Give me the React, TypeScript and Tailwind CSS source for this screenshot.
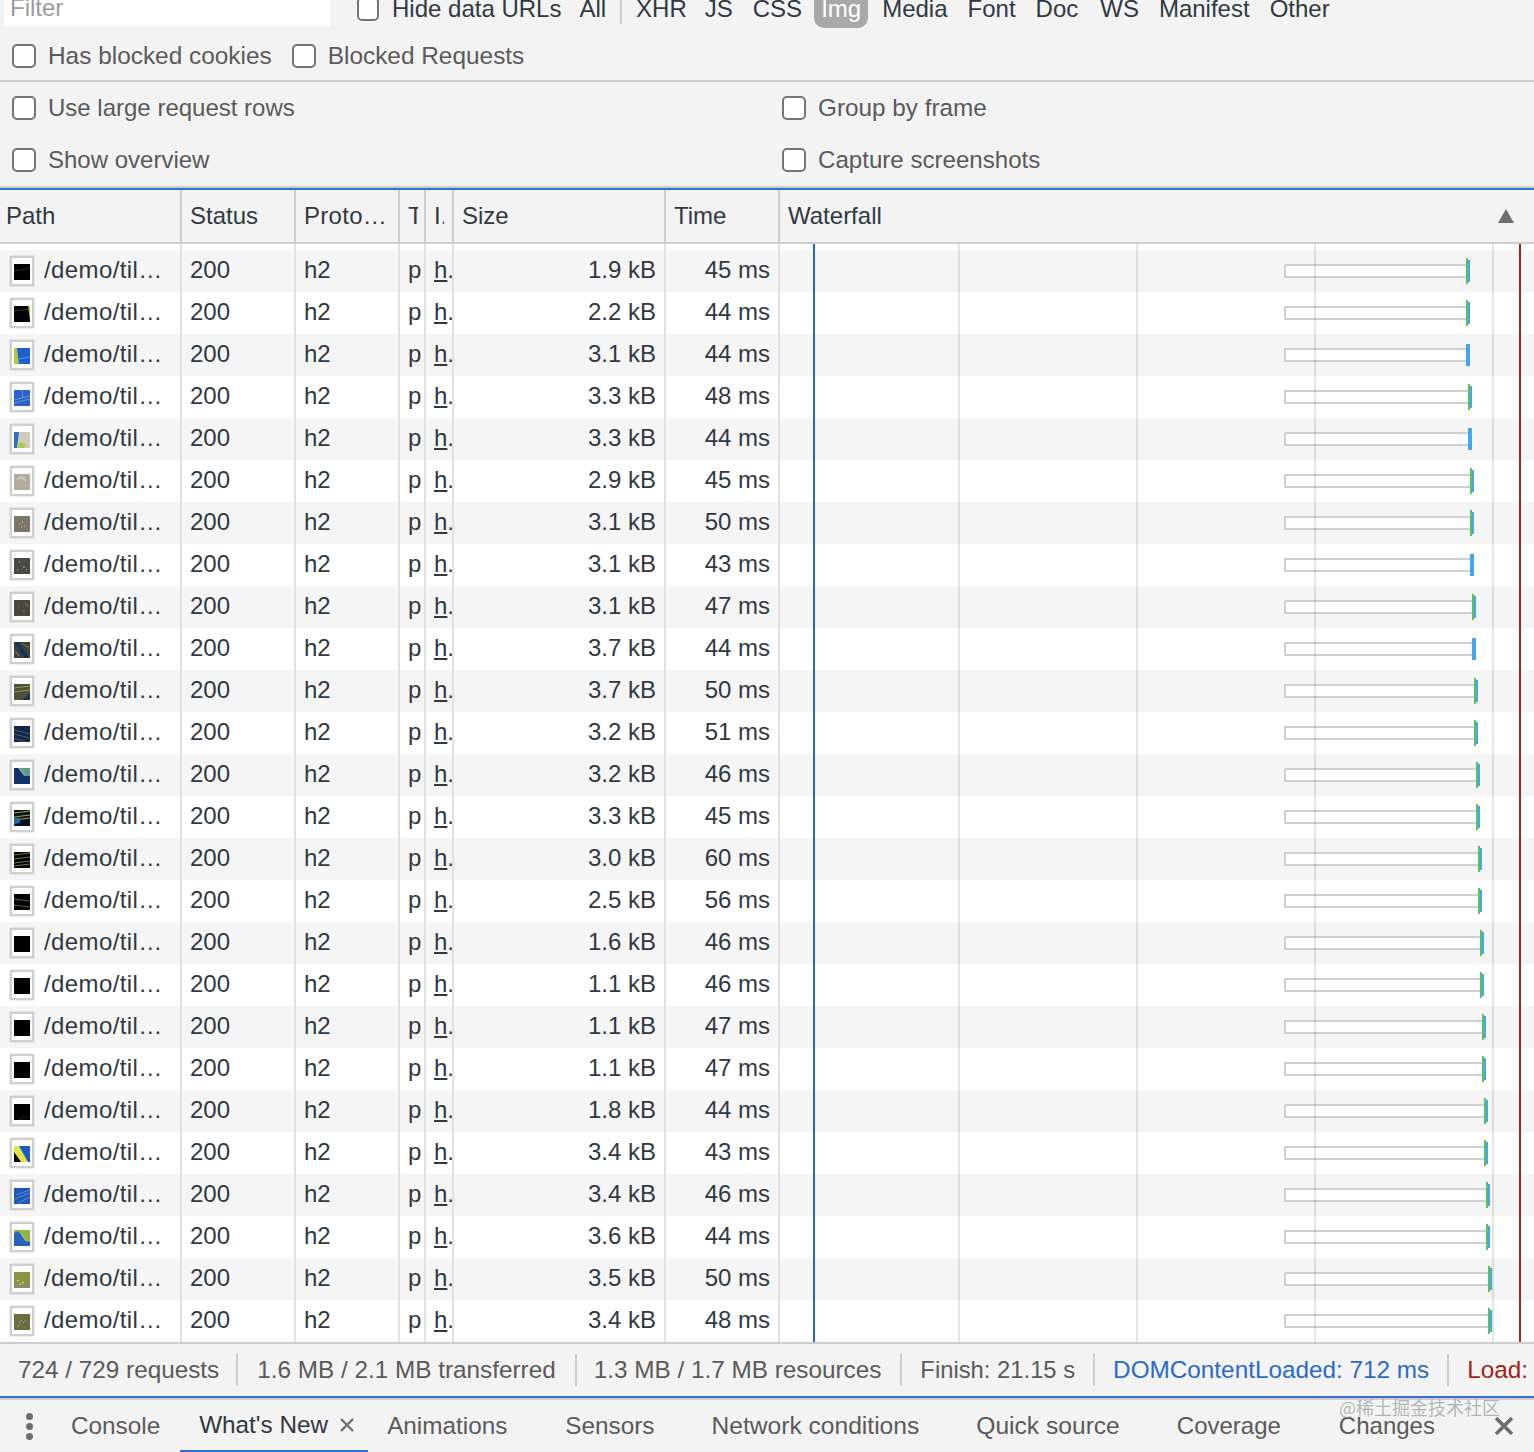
import React from "react";

type Req = { size: string; time: string; end: number; blueOnly?: boolean; thumb: number };

const requests: Req[] = [
  { size: "1.9 kB", time: "45 ms", end: 1466, thumb: 0 },
  { size: "2.2 kB", time: "44 ms", end: 1466, thumb: 1 },
  { size: "3.1 kB", time: "44 ms", end: 1466, blueOnly: true, thumb: 2 },
  { size: "3.3 kB", time: "48 ms", end: 1468, thumb: 3 },
  { size: "3.3 kB", time: "44 ms", end: 1468, blueOnly: true, thumb: 4 },
  { size: "2.9 kB", time: "45 ms", end: 1470, thumb: 5 },
  { size: "3.1 kB", time: "50 ms", end: 1470, thumb: 6 },
  { size: "3.1 kB", time: "43 ms", end: 1470, blueOnly: true, thumb: 7 },
  { size: "3.1 kB", time: "47 ms", end: 1472, thumb: 8 },
  { size: "3.7 kB", time: "44 ms", end: 1472, blueOnly: true, thumb: 9 },
  { size: "3.7 kB", time: "50 ms", end: 1474, thumb: 10 },
  { size: "3.2 kB", time: "51 ms", end: 1474, thumb: 11 },
  { size: "3.2 kB", time: "46 ms", end: 1476, thumb: 12 },
  { size: "3.3 kB", time: "45 ms", end: 1476, thumb: 13 },
  { size: "3.0 kB", time: "60 ms", end: 1478, thumb: 14 },
  { size: "2.5 kB", time: "56 ms", end: 1478, thumb: 15 },
  { size: "1.6 kB", time: "46 ms", end: 1480, thumb: 16 },
  { size: "1.1 kB", time: "46 ms", end: 1480, thumb: 16 },
  { size: "1.1 kB", time: "47 ms", end: 1482, thumb: 16 },
  { size: "1.1 kB", time: "47 ms", end: 1482, thumb: 16 },
  { size: "1.8 kB", time: "44 ms", end: 1484, thumb: 17 },
  { size: "3.4 kB", time: "43 ms", end: 1484, thumb: 18 },
  { size: "3.4 kB", time: "46 ms", end: 1486, thumb: 19 },
  { size: "3.6 kB", time: "44 ms", end: 1486, thumb: 20 },
  { size: "3.5 kB", time: "50 ms", end: 1488, thumb: 21 },
  { size: "3.4 kB", time: "48 ms", end: 1488, thumb: 22 },
];

// tiny previews of the map tiles, 16x16 viewBox
const thumbs: React.ReactNode[] = [
  <><rect width="16" height="16" fill="#000" /><path d="M0 7L16 4" stroke="#2f5a1e" strokeWidth="0.6" /></>,
  <><rect width="16" height="16" fill="#000" /><path d="M0 5L14 3" stroke="#1d6a5a" strokeWidth="0.6" /><path d="M14 0H16V14Z" fill="#b5c93a" /></>,
  <><rect width="16" height="16" fill="#1f5fd0" /><path d="M0 0H3L5 16H0Z" fill="#a8cf3a" /><path d="M5 11L16 9" stroke="#9fc4f0" strokeWidth="0.5" /></>,
  <><rect width="16" height="16" fill="#2a62c8" /><path d="M0 10L16 6M0 13L16 9M8 0L9 8" stroke="#8fb4ea" strokeWidth="0.6" /></>,
  <><rect width="16" height="16" fill="#cfcabb" /><path d="M0 0H5L3 16H0Z" fill="#2d6fc0" /><path d="M3 16L6 10L12 12L10 16Z" fill="#a9c94e" /></>,
  <><rect width="16" height="16" fill="#b3ab9b" /><path d="M3 5L8 3L12 7" stroke="#cdc6b4" strokeWidth="2" fill="none" /></>,
  <><rect width="16" height="16" fill="#7c766a" /><path d="M5 8H6M8 6H9M10 10H11M7 11H8" stroke="#c9c5b5" strokeWidth="1" /></>,
  <><rect width="16" height="16" fill="#4a4a40" /><path d="M9 9H11M5 4H6M12 12H13M3 12H4" stroke="#b5b5a0" strokeWidth="1" /></>,
  <><rect width="16" height="16" fill="#4d463c" /><path d="M11 3L14 7M9 11H11M4 6H5" stroke="#8a9050" strokeWidth="0.8" /></>,
  <><rect width="16" height="16" fill="#3d4236" /><path d="M2 0L13 16" stroke="#15315e" strokeWidth="4" /><path d="M9 2L15 6M1 9L5 14" stroke="#a8a860" strokeWidth="0.7" /></>,
  <><rect width="16" height="16" fill="#4f4f3a" /><path d="M0 4L16 2M0 8L16 6" stroke="#a9a860" strokeWidth="0.8" /><path d="M8 16L16 9V16Z" fill="#173358" /></>,
  <><rect width="16" height="16" fill="#12274f" /><path d="M0 4L16 8M0 8L16 12M0 12L12 16" stroke="#8a9a50" strokeWidth="0.5" /></>,
  <><rect width="16" height="16" fill="#12306a" /><path d="M4 0H16V8H10Z" fill="#5f9a8f" /><path d="M5 0L11 7" stroke="#c2c98a" strokeWidth="1" /></>,
  <><rect width="16" height="16" fill="#06131c" /><path d="M0 3L16 1M0 7L16 5M0 10L16 8" stroke="#a4b83e" strokeWidth="0.9" /><path d="M0 8H6V13L0 14Z" fill="#2a68a8" /></>,
  <><rect width="16" height="16" fill="#000" /><path d="M0 3L16 1M0 7L16 5M0 11L16 9M0 14L16 12" stroke="#8e9a30" strokeWidth="0.8" /></>,
  <><rect width="16" height="16" fill="#000" /><path d="M0 5L16 7M0 11L16 13" stroke="#7b7f24" strokeWidth="0.8" /></>,
  <rect width="16" height="16" fill="#000" />,
  <><rect width="16" height="16" fill="#000" /><path d="M4 16L14 12" stroke="#1e4a1a" strokeWidth="0.6" /></>,
  <><rect width="16" height="16" fill="#1b5bc4" /><path d="M0 0H5L14 16H5L0 14Z" fill="#e3e34a" /><path d="M0 6L7 16H0Z" fill="#000" /></>,
  <><rect width="16" height="16" fill="#2257bd" /><path d="M2 7L16 2M0 11L16 5M4 15L16 9" stroke="#86aee6" strokeWidth="0.6" /></>,
  <><rect width="16" height="16" fill="#8fb63e" /><path d="M0 3L5 1L12 11L16 12V16H0Z" fill="#2564b8" /><path d="M5 1L12 11" stroke="#c7e0a0" strokeWidth="0.8" /></>,
  <><rect width="16" height="16" fill="#8a9440" /><path d="M3 9L5 8M8 11L10 10M5 13L7 12" stroke="#dfe6b8" strokeWidth="1" /><rect y="13" width="16" height="3" fill="#8c8a6e" /></>,
  <><rect width="16" height="16" fill="#6b6c3c" /><path d="M5 9L8 6M9 9L12 6M3 13L6 11" stroke="#aab08a" strokeWidth="0.8" /></>,
];

function Check({ label, className = "", labelClass = "" }: { label: string; className?: string; labelClass?: string }) {
  return (
    <label className={`flex items-center gap-3 ${className}`}>
      <span className="h-6 w-6 shrink-0 rounded-[5px] border-2 border-[#767676] bg-white" />
      <span className={`text-[#5a5a5a] ${labelClass}`}>{label}</span>
    </label>
  );
}

const gridCols = "grid grid-cols-[182px_114px_104px_26px_28px_212px_114px_1fr]";
const cellLine = "border-r-2 border-[#e1e1e1]";
const headLine = "border-r-2 border-[#cdcdcd]";

function HeadCell({ children, className = "" }: { children?: React.ReactNode; className?: string }) {
  return <div className={`overflow-hidden whitespace-nowrap px-2 leading-[52px] ${headLine} ${className}`}>{children}</div>;
}

function Bar({ end, blueOnly }: { end: number; blueOnly?: boolean }) {
  return (
    <div className="ml-[504px] flex items-center">
      <div className="h-[14px] border-2 border-r-0 border-[#cfcfcf] bg-white" style={{ width: end - 1284 }} />
      {blueOnly ? (
        <div className="h-[22px] w-1 bg-[#45a5ee]" />
      ) : (
        <>
          <div className="h-[26px] w-0.5 bg-[#5cc05c]" />
          <div className="h-[22px] w-0.5 bg-[#45a5ee]" />
        </>
      )}
    </div>
  );
}

function Row({ req, odd }: { req: Req; odd: boolean }) {
  const cell = `overflow-hidden whitespace-nowrap px-2 leading-[40px] ${cellLine}`;
  return (
    <div className={`${gridCols} h-[42px] ${odd ? "bg-[#f5f5f5]" : "bg-white"}`}>
      <div className={`flex items-center pl-[10px] ${cellLine}`}>
        <div className="flex h-[30px] w-6 shrink-0 items-center justify-center border-2 border-[#cfcfcf] bg-white pt-0.5 shadow-[0_0_1px_#999]">
          <svg width="16" height="16" viewBox="0 0 16 16" className="block blur-[0.4px]">
            {thumbs[req.thumb]}
          </svg>
        </div>
        <span className="mb-0.5 ml-[10px] whitespace-nowrap tracking-[0.4px]">/demo/til…</span>
      </div>
      <div className={cell}>200</div>
      <div className={cell}>h2</div>
      <div className={cell}>p</div>
      <div className={cell}>
        <span className="underline">h</span>.
      </div>
      <div className={`${cell} text-right`}>{req.size}</div>
      <div className={`${cell} text-right`}>{req.time}</div>
      <div className="flex items-center">
        <Bar end={req.end} blueOnly={req.blueOnly} />
      </div>
    </div>
  );
}

const filters = [
  { name: "XHR", cls: "-mr-0.5 px-[6px]" },
  { name: "JS", cls: "px-[6px]" },
  { name: "CSS", cls: "px-[6px]" },
  { name: "Img", cls: "-ml-0.5 rounded-b-[10px] bg-[#a8a8a8] px-[7px] text-white" },
  { name: "Media", cls: "px-[6px]" },
  { name: "Font", cls: "px-[6px]" },
  { name: "Doc", cls: "px-[6px]" },
  { name: "WS", cls: "ml-0.5 px-[6px]" },
  { name: "Manifest", cls: "px-[6px]" },
  { name: "Other", cls: "px-[6px]" },
];

export default function App() {
  return (
    <div className="flex h-[1452px] w-[1534px] flex-col overflow-hidden bg-[#f3f3f3] font-['Liberation_Sans',Arial,sans-serif] text-[24px] text-[#303942]">
      {/* filter bar, cut off by the top of the shot */}
      <div className="flex h-[30px] shrink-0 items-end pb-0.5 pl-1">
        <div className="mb-0.5 flex h-[38px] w-[326px] items-center bg-white pl-[6px] pt-0.5 text-[#9b9b9b]">Filter</div>
        <label className="ml-[27px] flex h-[38px] items-center gap-[13px]">
          <span className="h-6 w-[22px] shrink-0 rounded-[5px] border-2 border-[#767676] bg-white" />
          <span className="whitespace-nowrap">Hide data URLs</span>
        </label>
        <div className="ml-3 flex h-[38px] items-center gap-2">
          <span className="px-[6px]">All</span>
          <span className="h-[34px] w-0.5 self-start bg-[#cdcdcd]" />
          {filters.map((f) => (
            <span key={f.name} className={`flex h-[38px] items-center ${f.cls}`}>
              {f.name}
            </span>
          ))}
        </div>
      </div>
      <div className="flex h-[52px] shrink-0 items-center gap-5 border-b-2 border-[#cdcdcd] pl-3 pt-[2px]">
        <Check label="Has blocked cookies" labelClass="text-[24.4px]" />
        <Check label="Blocked Requests" labelClass="text-[24.4px]" />
      </div>
      {/* settings */}
      <div className="grid h-[106px] shrink-0 grid-cols-[782px_1fr] grid-rows-2 border-b-2 border-[#cdcdcd]">
        <Check label="Use large request rows" className="pl-3" />
        <Check label="Group by frame" labelClass="text-[24.3px]" />
        <Check label="Show overview" className="pl-3" />
        <Check label="Capture screenshots" labelClass="text-[24.1px]" />
      </div>
      {/* table */}
      <div className="relative flex-1 border-t-2 border-[#2f6fd6]">
        <div className={`${gridCols} h-[54px] border-b-2 border-[#cdcdcd]`}>
          <HeadCell className="pl-[6px]">Path</HeadCell>
          <HeadCell>Status</HeadCell>
          <HeadCell className="tracking-[0.3px]">Proto…</HeadCell>
          <HeadCell>
            <span className="block w-[10px] overflow-hidden">T</span>
          </HeadCell>
          <HeadCell>
            <span className="block w-[10px] overflow-hidden">I.</span>
          </HeadCell>
          <HeadCell>Size</HeadCell>
          <HeadCell>Time</HeadCell>
          <div className="flex items-center justify-between pl-2 pr-5">
            <span>Waterfall</span>
            <svg width="16" height="14" viewBox="0 0 16 14" className="block">
              <path d="M8 0L16 14H0Z" fill="#6e6e6e" />
            </svg>
          </div>
        </div>
        <div className={`${gridCols} h-[6px] bg-white`}>
          {[0, 1, 2, 3, 4, 5, 6].map((i) => (
            <div key={i} className={cellLine} />
          ))}
          <div />
        </div>
        {requests.map((r, i) => (
          <Row key={i} req={r} odd={i % 2 === 0} />
        ))}
        {/* waterfall time markers sit over the rows */}
        <div className="absolute bottom-0 left-[813px] top-[54px] w-0.5 bg-[#2a66c4]" />
        <div className="absolute bottom-0 left-[958px] top-[54px] w-0.5 bg-black/10" />
        <div className="absolute bottom-0 left-[1136px] top-[54px] w-0.5 bg-black/10" />
        <div className="absolute bottom-0 left-[1314px] top-[54px] w-0.5 bg-black/10" />
        <div className="absolute bottom-0 left-[1492px] top-[54px] w-0.5 bg-black/10" />
        <div className="absolute bottom-0 left-[1519px] top-[54px] w-0.5 bg-[#a3231a]" />
      </div>
      {/* summary bar */}
      <div className="flex h-[54px] shrink-0 items-center whitespace-nowrap border-t-2 border-[#cdcdcd] text-[24.3px] text-[#5a5a5a]">
        <span className="pl-[18px] pr-[17px]">724 / 729 requests</span>
        <span className="h-8 w-0.5 bg-[#cdcdcd]" />
        <span className="px-[19px]">1.6 MB / 2.1 MB transferred</span>
        <span className="h-8 w-0.5 bg-[#cdcdcd]" />
        <span className="pl-[17px] pr-[19px]">1.3 MB / 1.7 MB resources</span>
        <span className="h-8 w-0.5 bg-[#cdcdcd]" />
        <span className="px-[18px] text-[23.8px]">Finish: 21.15 s</span>
        <span className="h-8 w-0.5 bg-[#cdcdcd]" />
        <span className="px-[18px] text-[#2a6bc9]">DOMContentLoaded: 712 ms</span>
        <span className="h-8 w-0.5 bg-[#cdcdcd]" />
        <span className="pl-[18px] text-[#a3231a]">Load:</span>
      </div>
      {/* drawer tabs */}
      <div className="relative flex h-14 shrink-0 items-stretch whitespace-nowrap border-t-2 border-[#2f6fd6] pt-0.5 text-[24.3px] text-[#5a5a5a] shadow-[inset_0_2px_0_#cdcdcd]">
        <div className="flex w-[52px] shrink-0 flex-col items-center justify-center gap-[3px] pl-[6px]">
          <span className="h-[7px] w-[7px] rounded-full bg-[#6e6e6e]" />
          <span className="h-[7px] w-[7px] rounded-full bg-[#6e6e6e]" />
          <span className="h-[7px] w-[7px] rounded-full bg-[#6e6e6e]" />
        </div>
        <div className="flex items-center pl-[19px] pr-5">Console</div>
        <div className="flex w-[188px] items-center border-b-2 border-[#2f6fd6] pl-[19px] text-[#303942]">
          What's New
          <svg width="16" height="16" viewBox="0 0 16 16" className="ml-[11px] block">
            <path d="M2 2L14 14M14 2L2 14" stroke="#6e6e6e" strokeWidth="2.4" />
          </svg>
        </div>
        <div className="flex items-center pl-[19px] pr-[39px]">Animations</div>
        <div className="flex items-center pl-[19px] pr-[38px]">Sensors</div>
        <div className="flex items-center pl-[19px] pr-[38px] text-[24.6px]">Network conditions</div>
        <div className="flex items-center pl-[19px] pr-[38px] text-[24.6px]">Quick source</div>
        <div className="flex items-center pl-[19px] pr-[39px] text-[24px]">Coverage</div>
        <div className="flex items-center pl-[19px] text-[24px]">Changes</div>
        <svg width="20" height="20" viewBox="0 0 20 20" className="ml-auto mr-5 block self-center">
          <path d="M2 2L18 18M18 2L2 18" stroke="#6e6e6e" strokeWidth="3.6" />
        </svg>
        {/* site watermark burned into the screenshot */}
        <span className="absolute left-[1339px] top-[-3px] font-['Noto_Sans_CJK_SC',sans-serif] text-[18px] leading-[24px] text-[#8a8a8a]/60">
          @稀土掘金技术社区
        </span>
      </div>
    </div>
  );
}
